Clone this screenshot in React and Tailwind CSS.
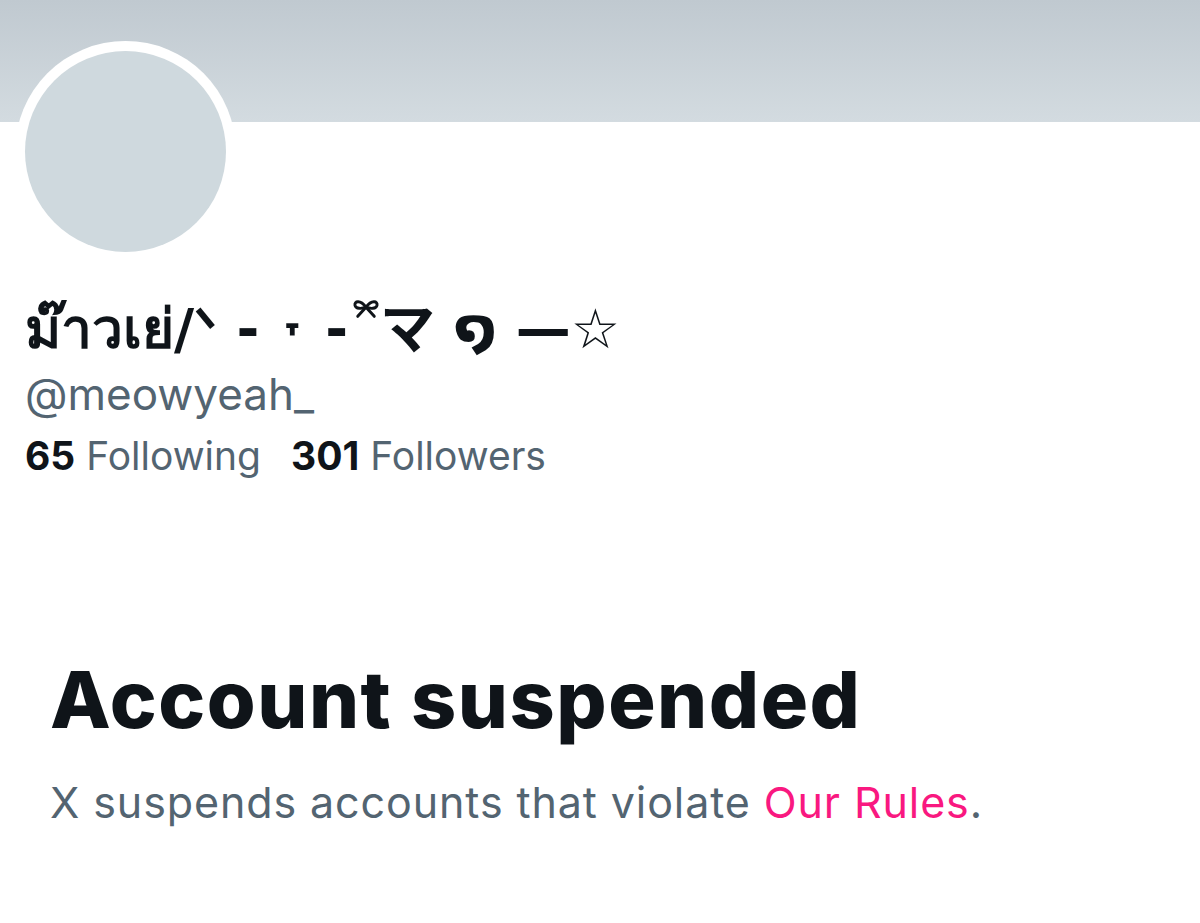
function Bow() {
  return (
    <svg viewBox="0 0 32 24" className="inline-block w-[32px] h-[22px] align-top mt-[4px] ml-[2px] -mr-[2px]" fill="none" stroke="#0f1419" strokeWidth="3.2" strokeLinecap="round" strokeLinejoin="round">
      <path d="M16 10 C10 2 3 3 4 8 C5 12 11 12 16 10 Z" />
      <path d="M16 10 C22 2 29 3 28 8 C27 12 21 12 16 10 Z" />
      <path d="M16 10 L7 20" />
      <path d="M16 10 L25 20" />
    </svg>
  );
}

export default function App() {
  return (
    <div className="w-[1200px] h-[923px] bg-white overflow-hidden font-['Inter','Noto_Sans','DejaVu_Sans','Noto_Sans_CJK_JP',sans-serif]">
      {/* banner */}
      <div className="h-[122px] bg-gradient-to-b from-[#c0c9d0] to-[#d3dbe0]" />

      <div className="px-[25px]">
        {/* avatar overlaps banner */}
        <div className="-mt-[81px] -ml-[10px] w-[221px] h-[221px] rounded-full bg-white p-[10px]">
          <div className="w-full h-full rounded-full bg-[#cfd9de]" />
        </div>

        <div className="mt-[32px] text-[55px] leading-[70px] font-bold text-[#0f1419] whitespace-nowrap font-['DejaVu_Sans','Noto_Sans_CJK_JP',sans-serif]">
          ม๊าวเย่/ᐠ - ˕ -<Bow />マ ໑ —☆
        </div>
        <div className="mt-[3px] text-[44px] leading-[54px] text-[#536471]">@meowyeah_</div>
        <div className="mt-[8px] flex gap-[30px] text-[39px] leading-[54px] text-[#536471]">
          <span>
            <span className="font-bold text-[#0f1419]">65</span> Following
          </span>
          <span>
            <span className="font-bold text-[#0f1419]">301</span> Followers
          </span>
        </div>
      </div>

      <div className="px-[50px] mt-[171px]">
        <h1 className="text-[79px] leading-[90px] font-extrabold text-[#0f1419] tracking-[1.5px]">Account suspended</h1>
        <p className="mt-[32px] text-[43px] leading-[52px] tracking-[0.9px] text-[#536471]">
          X suspends accounts that violate <span className="text-[#f91880]">Our Rules</span>.
        </p>
      </div>
    </div>
  );
}
